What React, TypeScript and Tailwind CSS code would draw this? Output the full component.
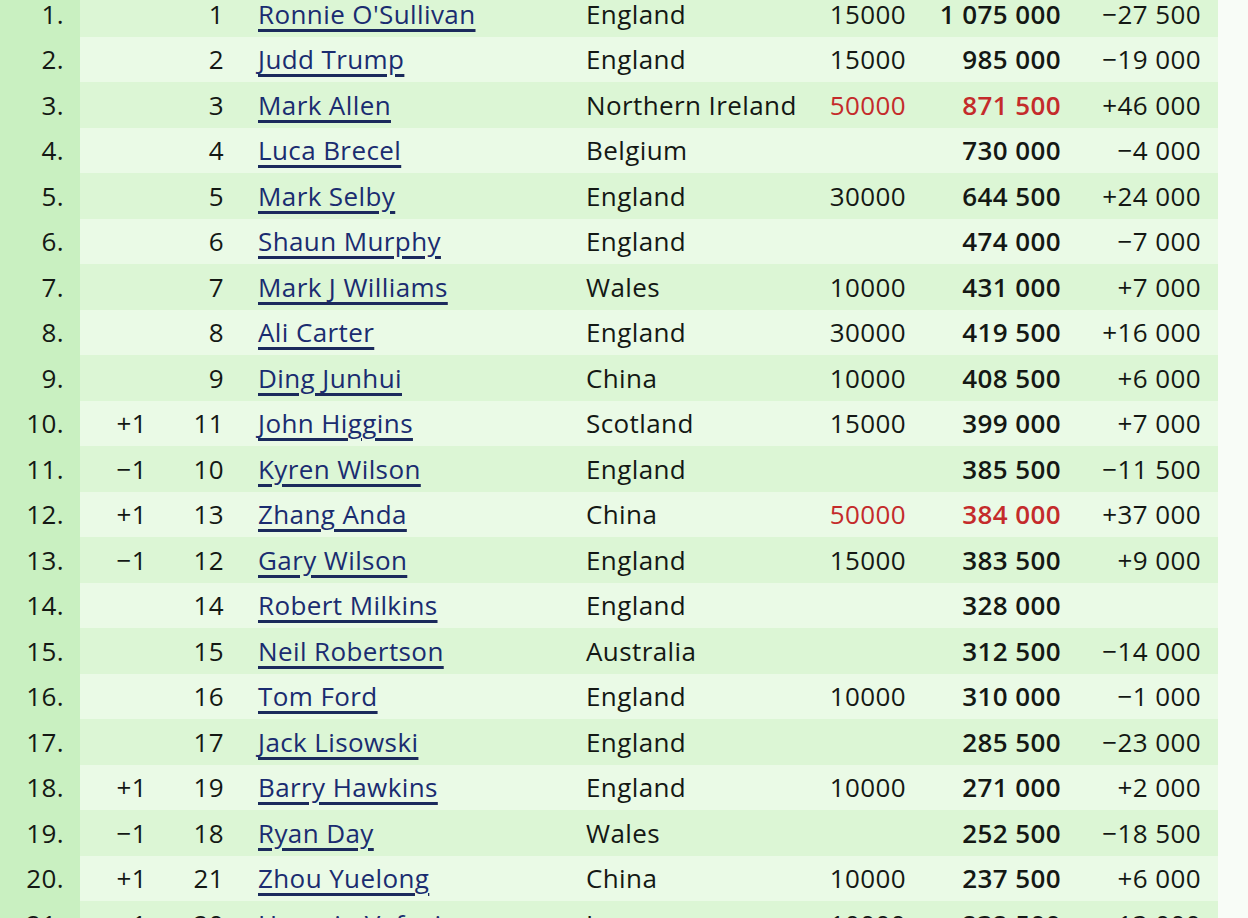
import React from "react";

type Row = {
  r: string;
  ch: string;
  prev: string;
  name: string;
  country: string;
  pts: string;
  total: string;
  diff: string;
  red?: boolean;
};

const M = "\u2212";
const S = "\u00a0";

const rows: Row[] = [
  { r: "1.", ch: "", prev: "1", name: "Ronnie O'Sullivan", country: "England", pts: "15000", total: `1${S}075${S}000`, diff: `${M}27${S}500` },
  { r: "2.", ch: "", prev: "2", name: "Judd Trump", country: "England", pts: "15000", total: `985${S}000`, diff: `${M}19${S}000` },
  { r: "3.", ch: "", prev: "3", name: "Mark Allen", country: "Northern Ireland", pts: "50000", total: `871${S}500`, diff: `+46${S}000`, red: true },
  { r: "4.", ch: "", prev: "4", name: "Luca Brecel", country: "Belgium", pts: "", total: `730${S}000`, diff: `${M}4${S}000` },
  { r: "5.", ch: "", prev: "5", name: "Mark Selby", country: "England", pts: "30000", total: `644${S}500`, diff: `+24${S}000` },
  { r: "6.", ch: "", prev: "6", name: "Shaun Murphy", country: "England", pts: "", total: `474${S}000`, diff: `${M}7${S}000` },
  { r: "7.", ch: "", prev: "7", name: "Mark J Williams", country: "Wales", pts: "10000", total: `431${S}000`, diff: `+7${S}000` },
  { r: "8.", ch: "", prev: "8", name: "Ali Carter", country: "England", pts: "30000", total: `419${S}500`, diff: `+16${S}000` },
  { r: "9.", ch: "", prev: "9", name: "Ding Junhui", country: "China", pts: "10000", total: `408${S}500`, diff: `+6${S}000` },
  { r: "10.", ch: "+1", prev: "11", name: "John Higgins", country: "Scotland", pts: "15000", total: `399${S}000`, diff: `+7${S}000` },
  { r: "11.", ch: `${M}1`, prev: "10", name: "Kyren Wilson", country: "England", pts: "", total: `385${S}500`, diff: `${M}11${S}500` },
  { r: "12.", ch: "+1", prev: "13", name: "Zhang Anda", country: "China", pts: "50000", total: `384${S}000`, diff: `+37${S}000`, red: true },
  { r: "13.", ch: `${M}1`, prev: "12", name: "Gary Wilson", country: "England", pts: "15000", total: `383${S}500`, diff: `+9${S}000` },
  { r: "14.", ch: "", prev: "14", name: "Robert Milkins", country: "England", pts: "", total: `328${S}000`, diff: "" },
  { r: "15.", ch: "", prev: "15", name: "Neil Robertson", country: "Australia", pts: "", total: `312${S}500`, diff: `${M}14${S}000` },
  { r: "16.", ch: "", prev: "16", name: "Tom Ford", country: "England", pts: "10000", total: `310${S}000`, diff: `${M}1${S}000` },
  { r: "17.", ch: "", prev: "17", name: "Jack Lisowski", country: "England", pts: "", total: `285${S}500`, diff: `${M}23${S}000` },
  { r: "18.", ch: "+1", prev: "19", name: "Barry Hawkins", country: "England", pts: "10000", total: `271${S}000`, diff: `+2${S}000` },
  { r: "19.", ch: `${M}1`, prev: "18", name: "Ryan Day", country: "Wales", pts: "", total: `252${S}500`, diff: `${M}18${S}500` },
  { r: "20.", ch: "+1", prev: "21", name: "Zhou Yuelong", country: "China", pts: "10000", total: `237${S}500`, diff: `+6${S}000` },
  { r: "21.", ch: `${M}1`, prev: "20", name: "Hossein Vafaei", country: "Iran", pts: "10000", total: `232${S}500`, diff: `${M}13${S}000` },
];

export default function App() {
  return (
    <div
      className="w-[1248px] h-[918px] overflow-hidden bg-[#f8fcf7] text-[#141814]"
      style={{ fontFamily: '"Open Sans", "Noto Sans", sans-serif' }}
    >
      <div className="-mt-[9px] w-[1218px] flex flex-col">
        {rows.map((row, i) => {
          const odd = i % 2 === 0;
          return (
            <div
              key={row.r}
              className={`grid grid-cols-[80px_80px_80px_330px_230px_120px_155px_143px] h-[45.5px] items-center text-[26px] tracking-[0.4px] leading-none ${
                odd ? "bg-[#dcf6d5]" : "bg-[#eafae6]"
              }`}
            >
              <div className="h-full flex items-center justify-end pr-[16px] bg-[#c9f0c1]">{row.r}</div>
              <div className="text-right pr-[13px]">{row.ch}</div>
              <div className="text-right pr-[16px]">{row.prev}</div>
              <div className="pl-[18px] whitespace-nowrap">
                <span className="text-[#1a2c70] underline decoration-[2.5px] underline-offset-[5px] decoration-[#1b2a5c]">
                  {row.name}
                </span>
              </div>
              <div className="pl-[16px] whitespace-nowrap">{row.country}</div>
              <div className={`text-right pr-[14px] ${row.red ? "text-[#c42b2b]" : ""}`}>{row.pts}</div>
              <div className={`text-right pr-[14px] font-semibold whitespace-nowrap ${row.red ? "text-[#c42b2b]" : ""}`}>
                {row.total}
              </div>
              <div className="text-right pr-[17px] whitespace-nowrap">{row.diff}</div>
            </div>
          );
        })}
      </div>
    </div>
  );
}
